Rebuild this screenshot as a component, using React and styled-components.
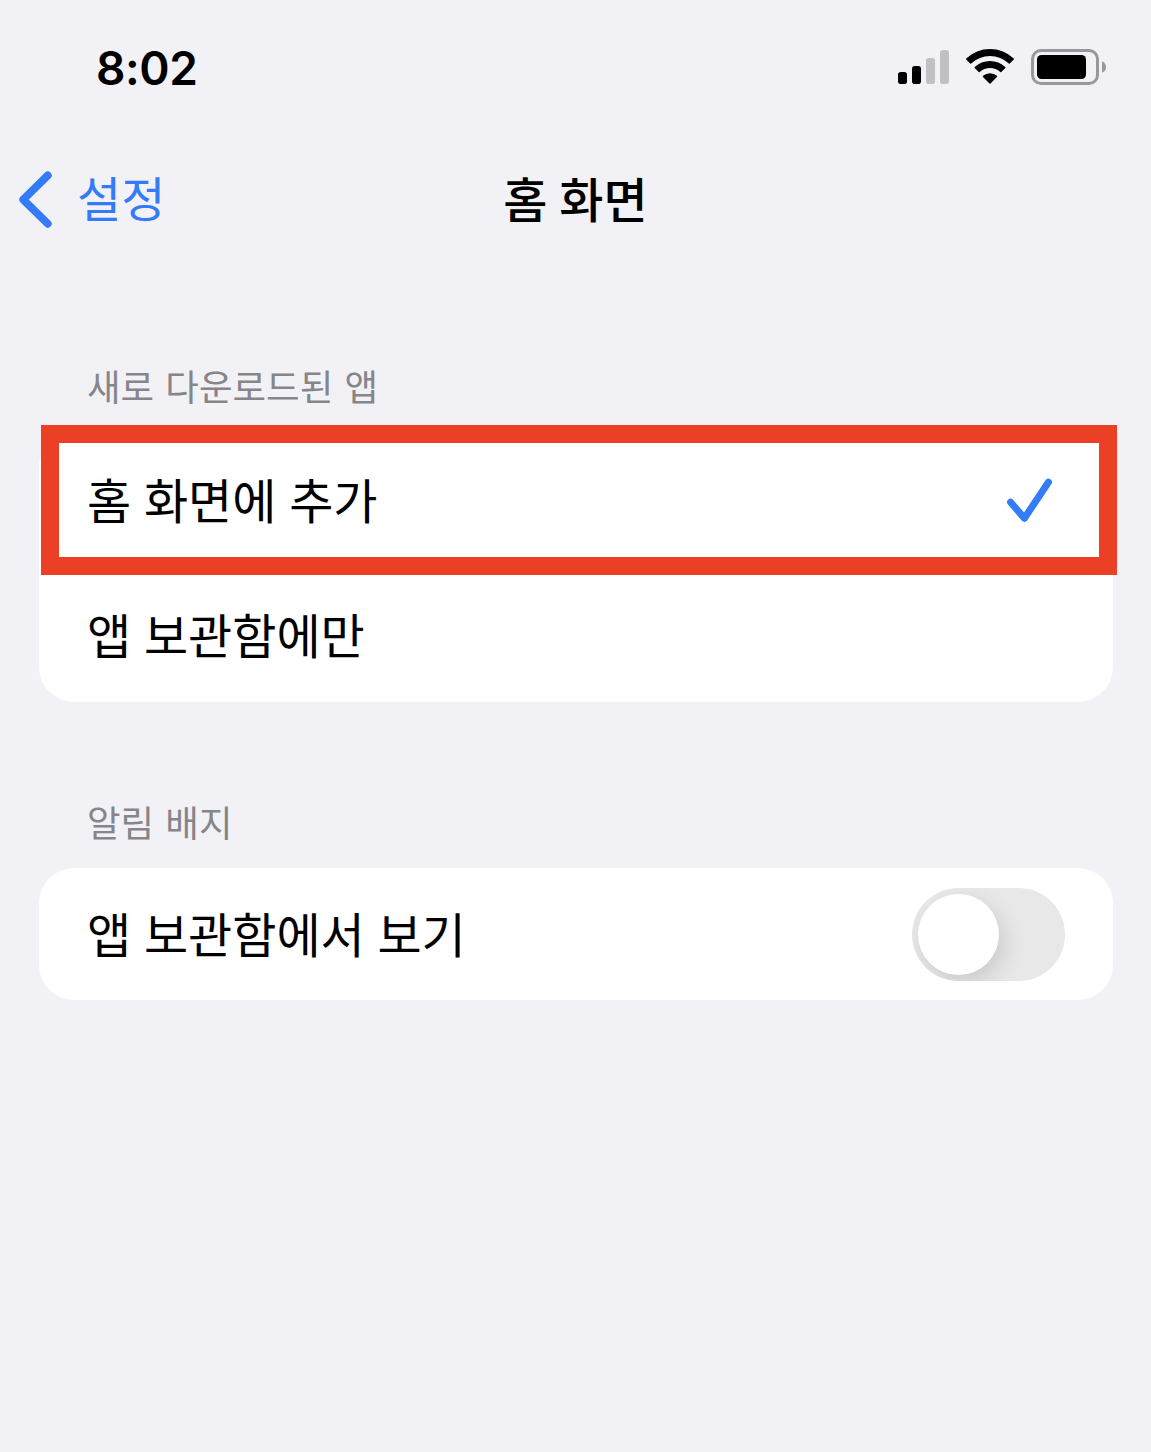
import React from 'react';
import styled, { createGlobalStyle } from 'styled-components';

const App = () => {
    return (
        <>
            <GlobalStyle />
            <Screen>
                <StatusBar>
                    <Time>8:02</Time>
                    <StatusIcons>
                        <SignalIcon />
                        <WifiIcon />
                        <BatteryIcon />
                    </StatusIcons>
                </StatusBar>
                <NavBar>
                    <BackLink>
                        <ChevronIcon />
                        <BackText>설정</BackText>
                    </BackLink>
                    <Title>홈 화면</Title>
                </NavBar>
                <Section>
                    <SectionTitle>새로 다운로드된 앱</SectionTitle>
                    <Card>
                        <Row $height={ 135 }>
                            <Label>홈 화면에 추가</Label>
                            <CheckIcon />
                            <Highlight />
                        </Row>
                        <Row $height={ 135 }>
                            <Label>앱 보관함에만</Label>
                        </Row>
                    </Card>
                </Section>
                <Section>
                    <SectionTitle>알림 배지</SectionTitle>
                    <Card>
                        <Row $height={ 132 }>
                            <Label>앱 보관함에서 보기</Label>
                            <Toggle type="button" role="switch" aria-checked="false">
                                <Knob />
                            </Toggle>
                        </Row>
                    </Card>
                </Section>
            </Screen>
        </>
    );
};

export default App;

const SignalIcon = () => (
    <svg width="51" height="36" viewBox="0 0 51 36">
        <rect x="0" y="23" width="9" height="12" rx="2.8" fill="#000" />
        <rect x="14" y="17" width="9" height="18" rx="2.8" fill="#000" />
        <rect x="28" y="9" width="9" height="26" rx="2.8" fill="#c1c0c5" />
        <rect x="42" y="1" width="9" height="34" rx="2.8" fill="#c1c0c5" />
    </svg>
);

const WifiIcon = () => (
    <svg width="50" height="38" viewBox="0 1 50 38" stroke="#000" strokeWidth="1.4" strokeLinejoin="round">
        <path d="M1.7 12.1 A33.4 33.4 0 0 1 48.3 12.1 L44.3 16 A27.8 27.8 0 0 0 5.7 16 Z" />
        <path d="M10.2 20.6 A21.6 21.6 0 0 1 39.8 20.6 L35.8 24.6 A16 16 0 0 0 14.2 24.6 Z" />
        <path d="M18.5 29.4 A10 10 0 0 1 31.5 29.4 L25 36 Z" />
    </svg>
);

const BatteryIcon = () => (
    <svg width="76" height="36" viewBox="0 0 76 36">
        <rect x="1.5" y="1.5" width="65" height="33" rx="8.5" fill="none" stroke="#98989c" strokeWidth="3" />
        <rect x="6" y="6" width="49" height="24" rx="4.5" fill="#000" />
        <path d="M71 12.2 C76.3 14.3 76.3 21.7 71 23.8 Z" fill="#98989c" />
    </svg>
);

const ChevronIcon = () => (
    <svg width="34" height="58" viewBox="0 0 34 58" fill="none">
        <path
            d="M29.8 4.4 L5.2 28.6 L29.8 52.8"
            stroke="#347bf7"
            strokeWidth="7.8"
            strokeLinecap="round"
            strokeLinejoin="round"
        />
    </svg>
);

const CheckIcon = () => (
    <svg width="46" height="46" viewBox="0 0 46 46" fill="none">
        <path
            d="M3.6 25.2 L17.4 41.3 L41.4 5.2"
            stroke="#347bf7"
            strokeWidth="7"
            strokeLinecap="round"
            strokeLinejoin="round"
        />
    </svg>
);

const GlobalStyle = createGlobalStyle`
  * {
    box-sizing: border-box;
  }
  body {
    margin: 0;
    background-color: #f2f1f6;
  }
`;

const Knob = styled.span`
  width: 81px;
  height: 81px;
  border-radius: 50%;
  background-color: #fff;
  box-shadow: 5px 8px 22px rgba(0, 0, 0, 0.13);
`;

const Toggle = styled.button`
  width: 153px;
  height: 93px;
  padding: 6px;
  border: none;
  border-radius: 47px;
  background-color: #e8e8e8;
  display: flex;
  align-items: center;
  overflow: hidden;
  cursor: pointer;
`;

/* red frame over the first row */
const Highlight = styled.div`
  position: absolute;
  top: -7px;
  left: 2px;
  right: -4px;
  height: 150px;
  border: 18px solid #eb4026;
  pointer-events: none;
`;

const Label = styled.span`
  padding-bottom: 4px;
  font-size: 48px;
  line-height: 70px;
  word-spacing: 2px;
`;

const Row = styled.div`
  position: relative;
  height: ${({ $height }) => $height}px;
  padding: 0 48px;
  display: flex;
  align-items: center;
  justify-content: space-between;
  > svg {
    margin-right: 12px;
  }
`;

const Card = styled.div`
  background-color: #fff;
  border-radius: 35px;
`;

const SectionTitle = styled.div`
  padding-left: 48px;
  margin-bottom: 19px;
  font-size: 36.5px;
  line-height: 54px;
  word-spacing: 3px;
  color: #868589;
`;

const Section = styled.div`
  margin: 0 38px 93px 39px;
`;

const Title = styled.div`
  padding-bottom: 7px;
  font-size: 48px;
  font-weight: 500;
  line-height: 70px;
  word-spacing: 1px;
`;

const BackText = styled.span`
  padding-bottom: 8px;
`;

const BackLink = styled.div`
  display: flex;
  align-items: center;
  gap: 25px;
  padding-left: 18px;
  font-size: 48px;
  line-height: 70px;
  color: #347bf7;
  cursor: pointer;
`;

const NavBar = styled.div`
  height: 132px;
  margin-bottom: 93px;
  display: grid;
  grid-template-columns: 1fr auto 1fr;
  align-items: center;
`;

const StatusIcons = styled.div`
  display: flex;
  align-items: center;
  gap: 16px;
`;

const Time = styled.div`
  padding-top: 1px;
  font-family: Inter, sans-serif;
  font-size: 46px;
  font-weight: 600;
  letter-spacing: -0.4px;
`;

const StatusBar = styled.div`
  height: 134px;
  padding: 0 44px 0 96px;
  display: flex;
  align-items: center;
  justify-content: space-between;
`;

const Screen = styled.div`
  width: 100%;
  min-height: 1452px;
  background-color: #f2f1f6;
  font-family: "Noto Sans CJK KR", sans-serif;
  color: #000;
`;
